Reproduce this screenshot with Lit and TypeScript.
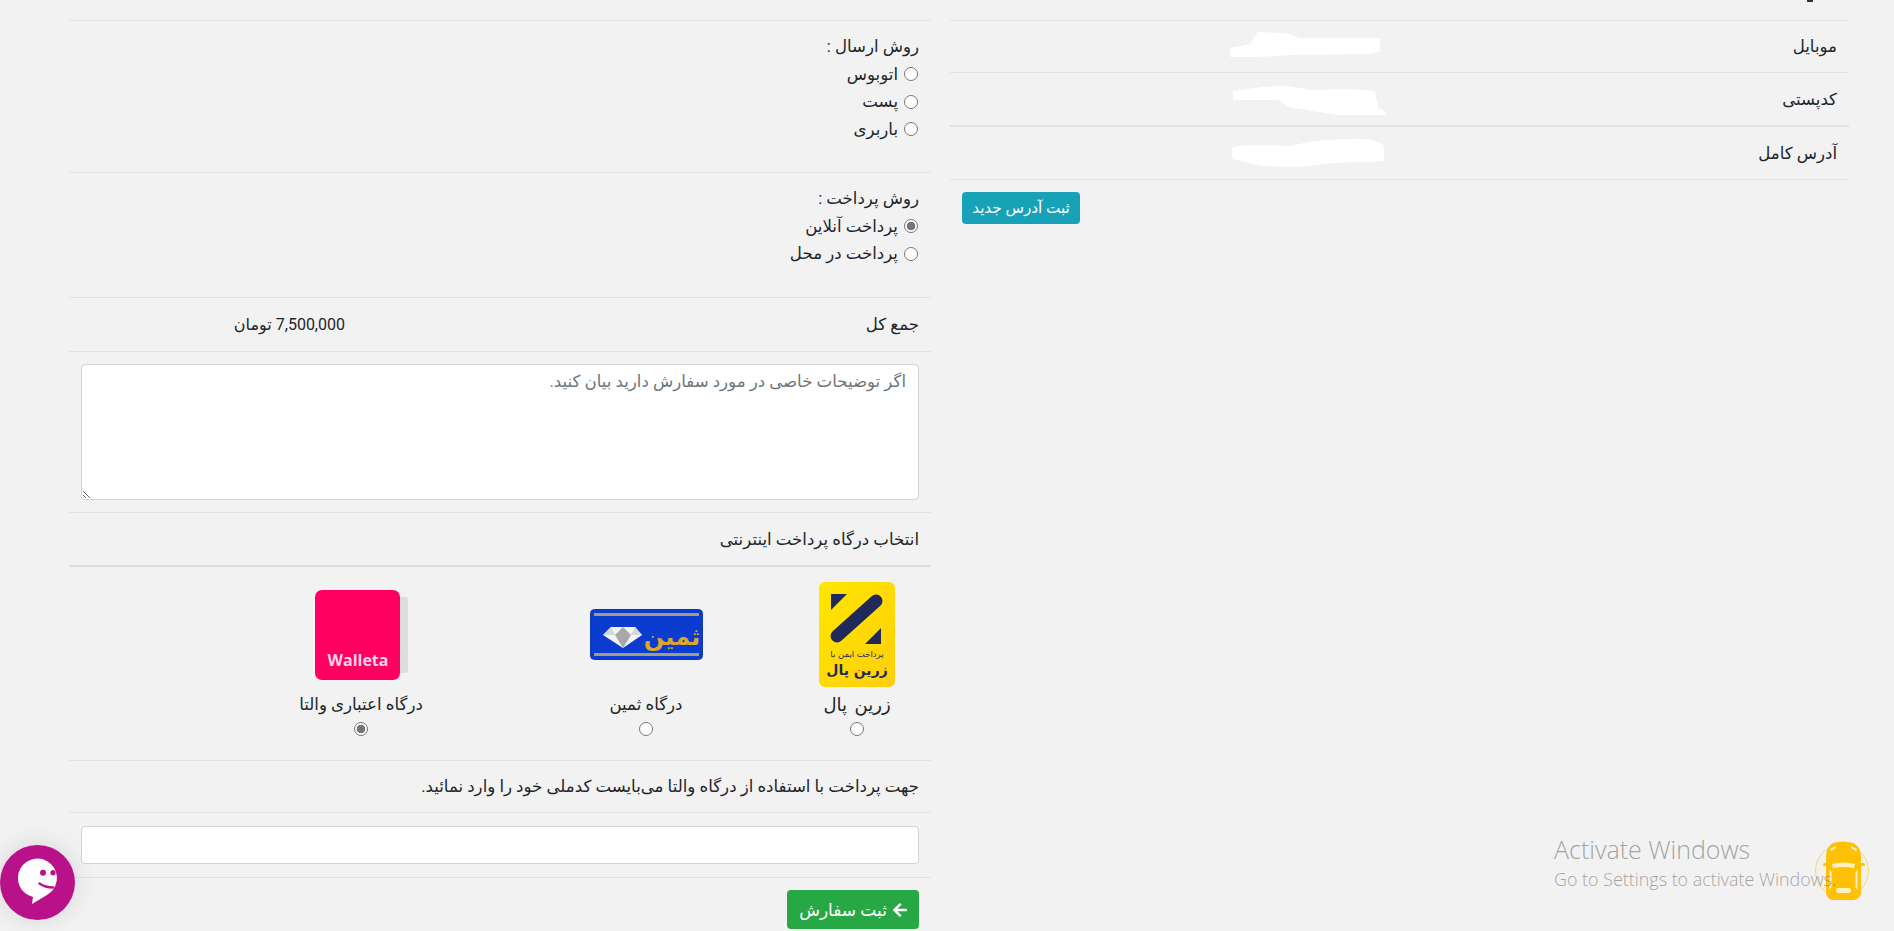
import { LitElement, html, css, svg } from "lit";
import { customElement } from "lit/decorators.js";

const blob1 = svg`<path d="M0 16 L20 12 L28 0 L55 1 L70 6 L150 6 L150 19 L142 22 L60 23 L30 25 L0 25Z" fill="#fff"/>`;
const blob2 = svg`<path d="M0 5 L30 1 L55 0 L78 4 L115 3 L142 5 L145 22 L152 25 L152 29 L105 29 L55 21 L45 14 L0 14Z" fill="#fff"/>`;
const blob3 = svg`<path d="M2 8 Q10 5 60 7 Q85 0 120 0 Q153 -1 153 10 L153 22 L100 24 L70 28 L30 27 L2 20 Q-1 14 2 8Z" fill="#fff"/>`;

@customElement("app-root")
export class AppRoot extends LitElement {
  static styles = css`
    :host {
      display: block;
      height: 931px;
      overflow: hidden;
      background: #f2f2f2;
      position: relative;
      font-family: Roboto, "DejaVu Sans", sans-serif;
      font-size: 16.6px;
      color: #212529;
      direction: rtl;
    }
    * { box-sizing: border-box; }
    .page {
      display: grid;
      grid-template-columns: 899px 862px;
      column-gap: 19px;
      padding-right: 45px;
      justify-content: start;
    }
    .row { border-bottom: 1px solid #e2e2e2; padding: 12px; }
    .cap { height: 21px; padding: 0; }
    .cap-mark { display: block; width: 6px; height: 2px; margin-right: 36px; background: #333; }

    .ship { height: 152px; }
    .pay { height: 125px; }
    .choice div { line-height: 27.5px; height: 27.5px; }
    .opt { display: flex; align-items: center; gap: 6px; padding-right: 1px; }
    .radio {
      width: 14px; height: 14px; flex: none;
      border-radius: 50%;
      border: 1px solid #767676;
      background: #fff;
      appearance: none;
      margin: 0;
      display: block;
    }
    .radio:checked {
      background: radial-gradient(circle, #757575 0 4px, #fff 4.6px);
    }
    .total {
      display: grid;
      grid-template-columns: 574px 1fr;
      line-height: 29px;
      height: 54px;
    }
    .price { font-size: 16px; }
    .note { padding: 12px; height: 161px; }
    textarea {
      display: block; width: 100%; height: 136px;
      border: 1px solid #ced4da; border-radius: 4px;
      background: #fff; padding: 6px 12px; margin: 0;
      font: inherit; color: #495057; direction: rtl; line-height: 21px;
    }
    textarea::placeholder { color: #6c757d; opacity: 1; }
    .title { height: 54px; line-height: 29px; border-bottom: 2px solid #dedede; }
    .gates {
      display: grid;
      grid-template-columns: 148px 274px 296px 1fr;
      height: 194px;
      padding: 15px 0 0;
    }
    .gate { display: flex; flex-direction: column; align-items: center; }
    .logo { height: 105px; display: flex; align-items: center; justify-content: center; }
    .logo svg { display: block; }
    .gate-label { line-height: 22px; margin-top: 7px; margin-bottom: 6px; }
    .gate-label.wide { font-size: 18px; word-spacing: 3px; }
    .msg { height: 52px; line-height: 28px; }
    .field { height: 65px; padding: 13px 12px 12px; }
    input.text {
      display: block; width: 100%; height: 38px;
      border: 1px solid #ced4da; border-radius: 4px; background: #fff;
      margin: 0;
    }
    .submit-row { padding: 12px; }
    .btn {
      display: inline-flex; align-items: center; justify-content: center;
      border: 0; margin: 0; font: inherit; color: #fff; border-radius: 4px;
    }
    .submit { background: #28a745; width: 132px; height: 39px; gap: 6px; font-size: 17px; }
    .submit svg { width: 14px; height: 16px; fill: #fff; display: block; }
    .info { background: #17a2b8; width: 118px; height: 32px; font-size: 15.2px; }

    .addr {
      display: grid;
      grid-template-columns: 452px 1fr;
      align-items: center;
      height: 53px;
      padding: 0 12px;
    }
    .addr svg { display: block; margin-right: 1px; }
    .addr.m { height: 52px; }
    .addr.m svg { margin-bottom: 5px; margin-right: 5px; }
    .addr.k { height: 54px; border-bottom-width: 2px; }
    .addr.k svg { margin-top: 2px; margin-right: 0; }
    .addr-actions { display: flex; justify-content: flex-end; padding: 12px 12px 0; }

    .chat { position: absolute; left: 0; top: 845px; width: 75px; height: 75px; border-radius: 50%;
      box-shadow: 0 0 24px rgba(0,0,0,.12); }
    .chat svg, .car svg { display: block; }
    .car { position: absolute; left: 1812px; top: 841px; }
    .activate {
      position: absolute; left: 1554px; top: 833px; direction: ltr;
      font-family: "Open Sans", Roboto, sans-serif; font-weight: 300;
      color: rgba(110,110,110,.62); white-space: nowrap;
    }
    .activate .a { font-size: 25px; line-height: 32px; }
    .activate .b { font-size: 17.9px; line-height: 28px; }
  `;

  render() {
    return html`
      <div class="page">
        <section>
          <div class="row cap"><span class="cap-mark"></span></div>
          <div class="row addr m"><span>موبایل</span><svg width="150" height="25">${blob1}</svg></div>
          <div class="row addr k"><span>کدپستی</span><svg width="152" height="29">${blob2}</svg></div>
          <div class="row addr"><span>آدرس کامل</span><svg width="153" height="28">${blob3}</svg></div>
          <div class="addr-actions"><button class="btn info">ثبت آدرس جدید</button></div>
        </section>

        <section>
          <div class="row cap"></div>
          <div class="row choice ship">
            <div>روش ارسال :</div>
            ${this.opt("اتوبوس", "send")}
            ${this.opt("پست", "send")}
            ${this.opt("باربری", "send")}
          </div>
          <div class="row choice pay">
            <div>روش پرداخت :</div>
            ${this.opt("پرداخت آنلاین", "pay", true)}
            ${this.opt("پرداخت در محل", "pay")}
          </div>
          <div class="row total"><span>جمع کل</span><span class="price">7,500,000 تومان</span></div>
          <div class="row note"><textarea placeholder="اگر توضیحات خاصی در مورد سفارش دارید بیان کنید."></textarea></div>
          <div class="row title">انتخاب درگاه پرداخت اینترنتی</div>
          <div class="row gates">
            <div class="gate">
              <div class="logo">${this.zarin()}</div>
              <div class="gate-label wide">زرین پال</div>
              <input class="radio" type="radio" name="gate" />
            </div>
            <div class="gate">
              <div class="logo">${this.samin()}</div>
              <div class="gate-label">درگاه ثمین</div>
              <input class="radio" type="radio" name="gate" />
            </div>
            <div class="gate">
              <div class="logo">${this.walleta()}</div>
              <div class="gate-label">درگاه اعتباری والتا</div>
              <input class="radio" type="radio" name="gate" checked />
            </div>
          </div>
          <div class="row msg">جهت پرداخت با استفاده از درگاه والتا می‌بایست کدملی خود را وارد نمائید.</div>
          <div class="row field"><input class="text" type="text" /></div>
          <div class="submit-row">
            <button class="btn submit">
              <svg viewBox="0 0 448 512"><path d="M190.5 66.9l22.2-22.2c9.4-9.4 24.6-9.4 33.9 0L441 239c9.4 9.4 9.4 24.6 0 33.9L246.6 467.3c-9.4 9.4-24.6 9.4-33.9 0l-22.2-22.2c-9.5-9.5-9.3-25 .4-34.3L311.4 296H24c-13.3 0-24-10.7-24-24v-32c0-13.3 10.7-24 24-24h287.4L190.9 101.2c-9.8-9.3-10-24.8-.4-34.3z" transform="matrix(-1 0 0 1 448 0)"/></svg>
              <span>ثبت سفارش</span>
            </button>
          </div>
        </section>
      </div>

      <div class="car">
        <svg width="60" height="62" viewBox="0 0 60 62">
          <circle cx="30" cy="30" r="26.5" fill="#f3f1ea" stroke="#f0d98c" stroke-width="1"/>
          <path d="M21 2 Q31 -1 41 2 Q48 5 49 14 L49 50 Q49 58 42 59 L20 59 Q14 58 14 50 L14 14 Q15 5 21 2Z" fill="#ffc107"/>
          <rect x="11" y="22" width="6" height="3" rx="1.5" fill="#ffc107"/>
          <rect x="47" y="22" width="6" height="3" rx="1.5" fill="#ffc107"/>
          <path d="M20 23 Q31 20 43 23 L42 27 Q31 25 21 27Z" fill="#fff1bd"/>
          <path d="M17.5 29 L19.5 31 L19.5 46 L17.5 49Z M45.5 29 L43.5 31 L43.5 46 L45.5 49Z" fill="#fff1bd"/>
          <rect x="24" y="47" width="15" height="5" rx="2.5" fill="#fff1bd"/>
          <path d="M18 8 L24 5 L24 7 L19 10Z M45 8 L39 5 L39 7 L44 10Z" fill="#fff1bd"/>
        </svg>
      </div>

      <div class="activate">
        <div class="a">Activate Windows</div>
        <div class="b">Go to Settings to activate Windows.</div>
      </div>

      <div class="chat">
        <svg width="75" height="75" viewBox="0 0 75 75">
          <circle cx="37.5" cy="37.5" r="37.5" fill="#b9118a"/>
          <path d="M47 50 A19.5 19.5 0 1 0 33 52 L32 59 Z" fill="#fff"/>
          <circle cx="43" cy="27.7" r="3" fill="#b9118a"/>
          <circle cx="53" cy="27.7" r="2.6" fill="#b9118a"/>
          <path d="M39.5 38.5 Q45 42.5 53 42.5" fill="none" stroke="#b9118a" stroke-width="2.4" stroke-linecap="round"/>
        </svg>
      </div>
    `;
  }

  opt(label: string, name: string, checked = false) {
    return html`<div class="opt"><input class="radio" type="radio" name=${name} ?checked=${checked} /><span>${label}</span></div>`;
  }

  zarin() {
    return svg`<svg width="76" height="105" viewBox="0 0 76 105">
      <defs><linearGradient id="zg" x1="0" y1="0" x2="1" y2="1"><stop offset="0" stop-color="#ffe600"/><stop offset="1" stop-color="#ffcf0a"/></linearGradient></defs>
      <rect width="76" height="105" rx="6" fill="url(#zg)"/>
      <path d="M12 12 H28 L12 28Z M62 46 V62 H46Z" fill="#1f2a5a"/>
      <path d="M57 19 L18 54" stroke="#1f2a5a" stroke-width="13" stroke-linecap="round"/>
      <text x="38" y="75" text-anchor="middle" direction="rtl" font-size="8.5" fill="#1f2a5a" font-family="DejaVu Sans">پرداخت ایمن با</text>
      <text x="38" y="93" text-anchor="middle" direction="rtl" font-size="14" font-weight="700" fill="#1f2a5a" font-family="DejaVu Sans">زرین پال</text>
    </svg>`;
  }

  samin() {
    return svg`<svg width="113" height="51" viewBox="0 0 113 51">
      <rect x=".5" y=".5" width="112" height="50" rx="4" fill="#0a3ccf" stroke="#0d3aa8"/>
      <rect x="4" y="4" width="105" height="3" fill="#a89c78"/>
      <rect x="4" y="44" width="105" height="3" fill="#a89c78"/>
      <path d="M13 26 L21 18 L45 18 L52 26 L33 39Z" fill="#f4f4f4"/>
      <path d="M25 26 L33 18 L41 26 L33 39Z" fill="#a8a8a8"/>
      <path d="M21 18 L25 26 L13 26Z M45 18 L41 26 L52 26Z" fill="#d8d8d8"/>
      <text x="82" y="36" text-anchor="middle" direction="rtl" font-size="24" font-weight="700" fill="#dba62d" font-family="DejaVu Sans">ثمین</text>
    </svg>`;
  }

  walleta() {
    return svg`<svg width="93" height="90" viewBox="0 0 93 90">
      <rect x="70" y="7" width="23" height="76" rx="3" fill="#dcdcdc"/>
      <rect width="85" height="90" rx="7" fill="#ff0062"/>
      <text x="43" y="76" text-anchor="middle" direction="ltr" font-size="16" font-weight="700" fill="#ffd3e6" font-family="Open Sans">Walleta</text>
    </svg>`;
  }
}
